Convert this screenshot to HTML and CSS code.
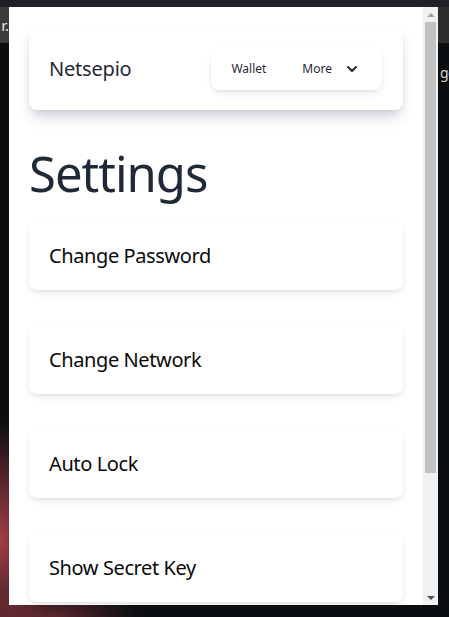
FILE: index.html
```html
<!DOCTYPE html>
<html lang="en">
<head>
<meta charset="utf-8">
<title>Netsepio Settings</title>
<link rel="stylesheet" href="styles.css">
</head>
<body>
<div class="screen">
  <div class="topbar"></div>
  <div class="middle">
    <div class="side side-left"><div class="tab tab-left">r.</div></div>
    <div class="popup">
      <div class="viewport">
        <div class="content">
          <header class="nav-card">
            <span class="brand">Netsepio</span>
            <nav class="nav-pill">
              <span class="nav-link">Wallet</span>
              <span class="nav-link more">More
                <svg class="chev" width="12" height="8" viewBox="0 0 12 8"><path d="M2 2 6 6l4-4" fill="none" stroke="#1f2937" stroke-width="2" stroke-linecap="round" stroke-linejoin="round"/></svg>
              </span>
            </nav>
          </header>
          <h1 class="title">Settings</h1>
          <div class="list">
            <div class="item">Change Password</div>
            <div class="item">Change Network</div>
            <div class="item">Auto Lock</div>
            <div class="item">Show Secret Key</div>
          </div>
        </div>
      </div>
      <div class="scrollbar">
        <div class="sb-btn"><span class="arrow-up"></span></div>
        <div class="sb-track"><div class="sb-thumb"></div></div>
        <div class="sb-btn"><span class="arrow-down"></span></div>
      </div>
    </div>
    <div class="side side-right"><div class="tab tab-right"></div><span class="ge">ge</span></div>
  </div>
  <div class="bottombar"></div>
</div>
</body>
</html>
```

FILE: styles.css
```css
* { box-sizing: border-box; }
html, body { margin: 0; padding: 0; }
body {
  width: 449px;
  height: 617px;
  overflow: hidden;
  background:
    radial-gradient(ellipse 60px 120px at 0px 540px, rgba(190,70,80,0.85), rgba(190,70,80,0) 100%),
    radial-gradient(ellipse 90px 30px at 50px 617px, rgba(160,60,70,0.55), rgba(160,60,70,0) 100%),
    #0a0e11;
  font-family: "Noto Sans", "Open Sans", sans-serif;
}
.screen { display: flex; flex-direction: column; height: 617px; }
.topbar { height: 7px; background: #202124; }
.middle { display: flex; height: 598px; }
.side { display: flex; flex-direction: column; }
.side-left { width: 9px; }
.side-right { flex: 1; overflow: hidden; }
.tab { height: 36px; }
.tab-left {
  background: #3b3b3b;
  color: #e6e6e6;
  font-size: 15px;
  line-height: 36px;
  text-align: right;
  overflow: hidden;
  white-space: nowrap;
}
.tab-right { background: #2d2d2e; }
.ge {
  margin-top: 21px;
  color: #d8d8d8;
  font-size: 14px;
  line-height: 18px;
  white-space: nowrap;
  padding-left: 2px;
  letter-spacing: -0.5px;
}
.popup {
  width: 429px;
  height: 598px;
  background: #ffffff;
  display: flex;
}
.viewport {
  flex: 1;
  overflow: hidden;
}
.content {
  padding: 20px 20px 158px 20px;
  display: flex;
  flex-direction: column;
}
.nav-card {
  display: flex;
  align-items: center;
  justify-content: space-between;
  padding: 20px 21px 20px 20px;
  border-radius: 8px;
  background: #fff;
  box-shadow: 0 10px 15px -3px rgba(30,41,80,0.18), 0 4px 6px -2px rgba(30,41,80,0.10), 0 0 3px rgba(0,0,0,0.03);
}
.brand {
  font-size: 20px;
  line-height: 28px;
  color: #1f2937;
  letter-spacing: -0.2px;
}
.nav-pill {
  display: flex;
  align-items: center;
  height: 43px;
  padding: 0 24px 0 20px;
  border-radius: 8px;
  background: #fff;
  box-shadow: 0 4px 8px -2px rgba(0,0,0,0.10), 0 2px 4px -1px rgba(0,0,0,0.05), 0 0 2px rgba(0,0,0,0.03);
  font-size: 12px;
  color: #1f2937;
}
.nav-link { display: flex; align-items: center; }
.more { margin-left: 36px; gap: 14px; }
.chev { display: block; }
.title {
  margin: 35px 0 21px 0;
  font-size: 49px;
  line-height: 56px;
  font-weight: 400;
  letter-spacing: -1px;
  color: #1f2937;
}
.list { display: flex; flex-direction: column; gap: 36px; }
.item {
  padding: 20px;
  font-size: 20px;
  line-height: 28px;
  letter-spacing: -0.4px;
  color: #0a0a0a;
  border-radius: 8px;
  background: #fff;
  box-shadow: 0 4px 8px -2px rgba(0,0,0,0.10), 0 2px 4px -1px rgba(0,0,0,0.05), 0 0 3px rgba(0,0,0,0.025);
}
.scrollbar {
  width: 15px;
  background: #f1f1f1;
  display: flex;
  flex-direction: column;
}
.sb-btn {
  height: 15px;
  display: flex;
  align-items: center;
  justify-content: center;
}
.arrow-up {
  width: 0; height: 0;
  border-left: 4px solid transparent;
  border-right: 4px solid transparent;
  border-bottom: 4px solid #a3a3a3;
}
.arrow-down {
  width: 0; height: 0;
  border-left: 4px solid transparent;
  border-right: 4px solid transparent;
  border-top: 4px solid #505050;
}
.sb-track { flex: 1; padding: 0 2px; }
.sb-thumb {
  height: 451px;
  background: #c1c1c1;
}
.bottombar { flex: 1; }
```
